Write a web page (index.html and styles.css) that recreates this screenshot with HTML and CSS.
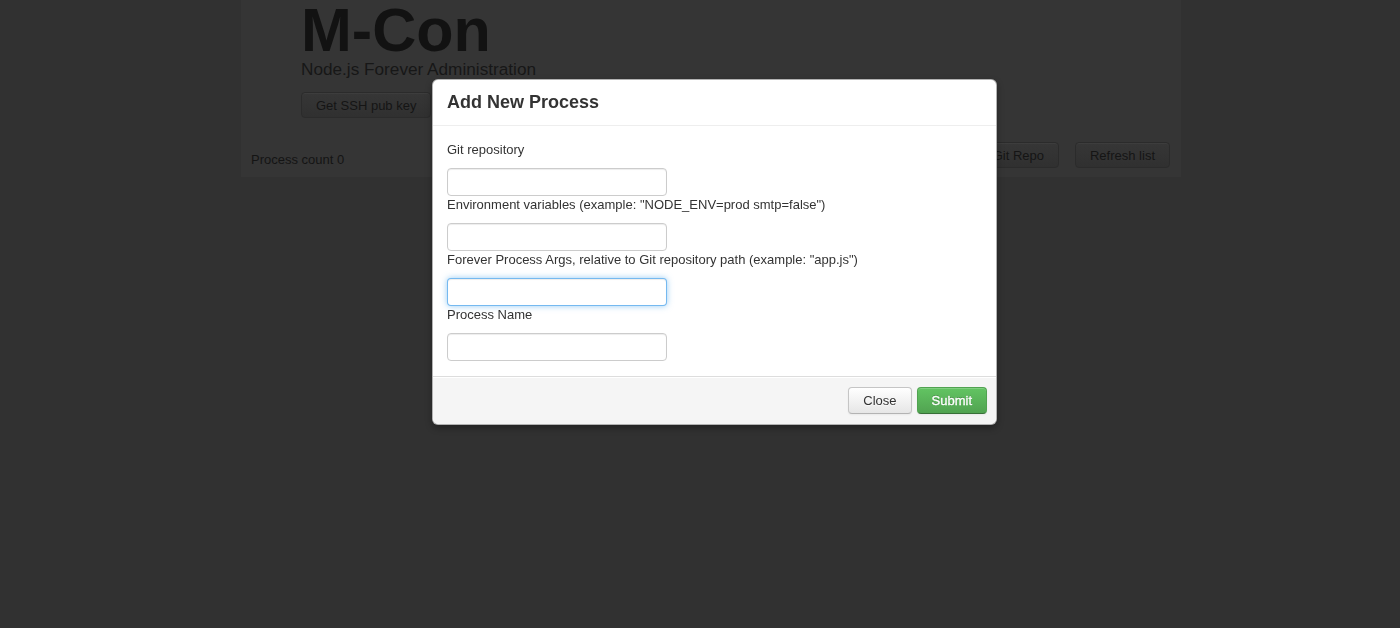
FILE: index.html
```html
<!DOCTYPE html>
<html lang="en">
<head>
<meta charset="utf-8">
<title>M-Con</title>
<link rel="stylesheet" href="styles.css">
</head>
<body>
<div class="page">
  <div class="hero">
    <h1 class="hero-title">M-Con</h1>
    <p class="hero-sub">Node.js Forever Administration</p>
    <button class="bg-btn bg-btn-hero">Get SSH pub key</button>
  </div>
  <div class="toolbar">
    <span class="count">Process count 0</span>
    <div class="toolbar-actions">
      <button class="bg-btn">Add Git Repo</button>
      <button class="bg-btn">Refresh list</button>
    </div>
  </div>
</div>

<div class="backdrop"></div>

<div class="modal">
  <div class="modal-header">
    <h3 class="modal-title">Add New Process</h3>
  </div>
  <form class="modal-body">
    <label class="field-label">Git repository</label>
    <input class="field-input" type="text">
    <label class="field-label">Environment variables (example: "NODE_ENV=prod smtp=false")</label>
    <input class="field-input" type="text">
    <label class="field-label">Forever Process Args, relative to Git repository path (example: "app.js")</label>
    <input class="field-input is-focused" type="text">
    <label class="field-label">Process Name</label>
    <input class="field-input" type="text">
  </form>
  <div class="modal-footer">
    <button class="btn">Close</button>
    <button class="btn btn-success">Submit</button>
  </div>
</div>
</body>
</html>
```

FILE: styles.css
```css
* { box-sizing: border-box; }

html, body {
  margin: 0;
  padding: 0;
  height: 100%;
}

body {
  background: #313131;
  font-family: "Liberation Sans", Arial, Helvetica, sans-serif;
  font-size: 13px;
  line-height: 18px;
  color: #333;
  overflow: hidden;
}

/* ---------- dimmed page ---------- */
.page {
  width: 940px;
  margin-left: 241px;
  background: #353535;
}

.hero {
  padding: 0 60px;
}

.hero-title {
  margin: 0;
  font-size: 61px;
  line-height: 60px;
  font-weight: bold;
  color: #121212;
}

.hero-sub {
  margin: 0;
  font-size: 17.2px;
  line-height: 19px;
  color: #171717;
}

.bg-btn {
  display: inline-block;
  height: 26px;
  padding: 0 14px;
  font-family: inherit;
  font-size: 13px;
  color: #151515;
  background: linear-gradient(#363636, #303030);
  border: 1px solid #2b2b2b;
  border-radius: 4px;
  box-shadow: inset 0 1px 0 rgba(255,255,255,0.04);
}

.bg-btn-hero {
  margin-top: 13px;
}

.toolbar {
  display: flex;
  justify-content: space-between;
  align-items: flex-end;
  padding: 24px 11px 9px 10px;
}

.count {
  line-height: 16px;
  color: #141414;
}

.toolbar-actions {
  display: flex;
  gap: 16px;
}

/* ---------- modal ---------- */
.backdrop {
  position: fixed;
  inset: 0;
  background: transparent;
}

.modal {
  position: fixed;
  left: 432px;
  top: 79px;
  width: 565px;
  background: #fff;
  border: 1px solid rgba(0,0,0,0.3);
  border-radius: 6px;
  box-shadow: 0 3px 7px rgba(0,0,0,0.3);
}

.modal-header {
  padding: 8px 14px;
  border-bottom: 1px solid #eee;
}

.modal-title {
  margin: 0;
  font-size: 18px;
  line-height: 29px;
  font-weight: bold;
  color: #333;
}

.modal-body {
  display: flex;
  flex-direction: column;
  align-items: flex-start;
  padding: 15px 14px;
  margin: 0;
}

.field-label {
  display: block;
  line-height: 18px;
  margin-bottom: 9px;
  color: #333;
}

.field-input {
  display: block;
  width: 220px;
  height: 28px;
  padding: 4px 6px;
  font-family: inherit;
  font-size: 13px;
  background: #fff;
  border: 1px solid #ccc;
  border-radius: 4px;
  box-shadow: inset 0 1px 1px rgba(0,0,0,0.075);
  outline: none;
}

.field-input.is-focused {
  border-color: rgba(82,168,236,0.8);
  box-shadow: inset 0 1px 1px rgba(0,0,0,0.075), 0 0 6px rgba(82,168,236,0.6);
}

.modal-footer {
  display: flex;
  justify-content: flex-end;
  gap: 5px;
  padding: 10px 9px 10px 14px;
  background: #f5f5f5;
  border-top: 1px solid #ddd;
  border-radius: 0 0 6px 6px;
  box-shadow: inset 0 1px 0 #fff;
}

.btn {
  height: 27px;
  padding: 0 14px;
  font-family: inherit;
  font-size: 13px;
  line-height: 18px;
  color: #333;
  text-shadow: 0 1px 1px rgba(255,255,255,0.75);
  background: linear-gradient(#ffffff, #e6e6e6);
  border: 1px solid #c5c5c5;
  border-bottom-color: #b3b3b3;
  border-radius: 4px;
  box-shadow: inset 0 1px 0 rgba(255,255,255,0.2), 0 1px 2px rgba(0,0,0,0.05);
}

.btn-success {
  color: #fff;
  text-shadow: 0 -1px 0 rgba(0,0,0,0.25);
  background: linear-gradient(#62c462, #51a351);
  border-color: #51a351 #51a351 #387038;
  font-weight: normal;
  -webkit-text-stroke: 0.3px #fff;
}
```
